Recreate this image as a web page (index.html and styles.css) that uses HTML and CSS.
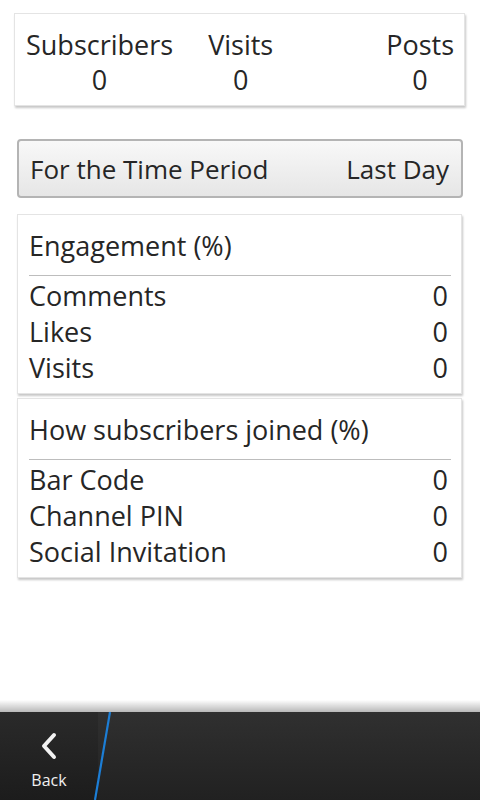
FILE: index.html
```html
<!DOCTYPE html>
<html>
<head>
<meta charset="utf-8">
<link rel="stylesheet" href="styles.css">
</head>
<body>
<div class="screen">
  <main class="content">
    <section class="card stats">
      <div class="stat stat-subs"><div>Subscribers</div><div>0</div></div>
      <div class="stat stat-visits"><div>Visits</div><div>0</div></div>
      <div class="stat stat-posts"><div>Posts</div><div>0</div></div>
    </section>

    <div class="period">
      <span>For the Time Period</span>
      <span>Last Day</span>
    </div>

    <section class="card panel panel-first">
      <div class="panel-title">Engagement (%)</div>
      <div class="row"><span>Comments</span><span>0</span></div>
      <div class="row"><span>Likes</span><span>0</span></div>
      <div class="row"><span>Visits</span><span>0</span></div>
    </section>

    <section class="card panel">
      <div class="panel-title">How subscribers joined (%)</div>
      <div class="row"><span>Bar Code</span><span>0</span></div>
      <div class="row"><span>Channel PIN</span><span>0</span></div>
      <div class="row"><span>Social Invitation</span><span>0</span></div>
    </section>
  </main>

  <footer class="actionbar">
    <div class="back">
      <svg class="chev" width="20" height="28" viewBox="0 0 20 28">
        <path d="M15 3 L5 14 L15 25" fill="none" stroke="#f2f2f2" stroke-width="4" stroke-linecap="round" stroke-linejoin="round"/>
      </svg>
      <span class="back-label">Back</span>
    </div>
    <svg class="divider" width="30" height="88" viewBox="0 0 30 88">
      <line x1="21" y1="0" x2="6" y2="88" stroke="#1c7ed6" stroke-width="2.2"/>
    </svg>
  </footer>
</div>
</body>
</html>
```

FILE: styles.css
```css
* { box-sizing: border-box; }
html, body { margin: 0; padding: 0; background: #ffffff; }
body {
  font-family: "Open Sans", Lato, sans-serif;
  color: #262626;
}
.screen {
  width: 480px;
  height: 800px;
  display: flex;
  flex-direction: column;
  overflow: hidden;
}
.content {
  flex: 1;
  display: flex;
  flex-direction: column;
}
.card {
  background: #ffffff;
  border: 1px solid #e4e4e4;
  box-shadow: 1px 2px 2px rgba(0,0,0,0.22);
}
.stats {
  margin: 13px 15px 0 14px;
  height: 93px;
  padding: 13px 10px 0 11px;
  display: flex;
  font-size: 27px;
  line-height: 35px;
}
.stat { text-align: center; }
.stat-visits { margin-left: 35px; }
.stat-posts { margin-left: auto; }

.period {
  margin: 33px 17px 0 17px;
  height: 59px;
  border: 2px solid #b4b4b4;
  border-radius: 4px;
  background: linear-gradient(#f8f8f8, #e6e6e6);
  display: flex;
  align-items: center;
  justify-content: space-between;
  padding: 0 12px 0 11px;
  font-size: 26px;
}

.panel {
  margin: 0 18px 0 17px;
  height: 180px;
  padding: 13px 10px 8px 11px;
  font-size: 27px;
  line-height: 36px;
}
.panel-first { margin-top: 16px; margin-bottom: 4px; }
.panel-title {
  padding: 0 0 11px 0;
  border-bottom: 1px solid #bdbdbd;
  margin-bottom: 2px;
}
.row {
  display: flex;
  justify-content: space-between;
  padding: 0 3px 0 0;
}

.actionbar {
  height: 88px;
  position: relative;
  background: linear-gradient(#303030, #212121);
  display: flex;
}
.actionbar::before {
  content: "";
  position: absolute;
  left: 0; right: 0; top: -12px;
  height: 12px;
  background: linear-gradient(rgba(0,0,0,0), rgba(0,0,0,0.28));
}
.back {
  width: 98px;
  display: flex;
  flex-direction: column;
  align-items: center;
  padding-top: 20px;
  background: linear-gradient(#2a2a2a, #1c1c1c);
}
.chev { display: block; }
.back-label {
  color: #f0f0f0;
  font-size: 16px;
  line-height: 20px;
  margin-top: 10px;
}
.divider {
  position: absolute;
  left: 89px;
  top: 0;
}
```
